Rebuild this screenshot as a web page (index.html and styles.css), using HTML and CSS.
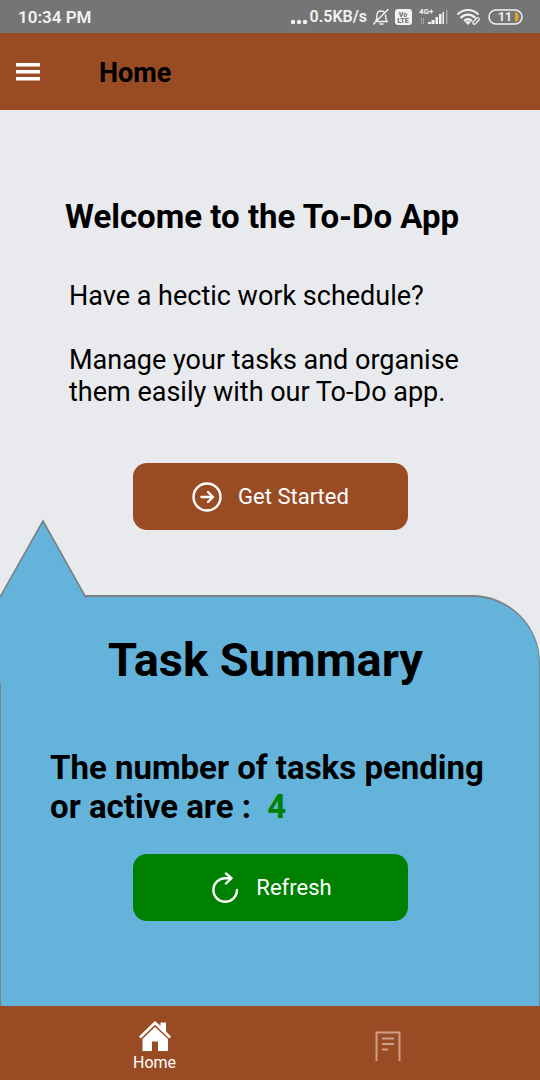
FILE: index.html
```html
<!DOCTYPE html>
<html lang="en">
<head>
<meta charset="utf-8">
<meta name="viewport" content="width=device-width, initial-scale=1">
<title>Home</title>
<link rel="stylesheet" href="styles.css">
</head>
<body class="app">
<div class="status-bar">
  <span>10:34 PM</span>
  <div class="status-right">
    <svg width="20" height="16" viewBox="0 0 20 16" fill="currentColor"><circle cx="3" cy="13" r="2.200"/><circle cx="9" cy="13" r="2.200"/><circle cx="15" cy="13" r="2.200"/></svg>
    <span class="speed">0.5KB/s</span>
    <svg class="bell" width="18" height="18" viewBox="0 0 18 18" fill="none" stroke="currentColor" stroke-width="1.400" stroke-linecap="round"><path d="M4 12.500C5 11 5 9 5 7c0-3 2-4 4-4 1 0 2 .3 3 1M13.500 7c0 3 .2 4.500 1.500 6.500H4.500M8 16h3M16 1.500 1.500 16"/></svg>
    <svg class="volte" width="17" height="16" viewBox="0 0 17 16"><rect width="17" height="16" rx="3" fill="currentColor"/><text class="volte-text" x="8" y="8" text-anchor="middle">Vo</text><text class="volte-text" x="8" y="14" text-anchor="middle">LTE</text></svg>
    <svg class="signal" width="29" height="18" viewBox="0 0 29 18" fill="currentColor"><text class="signal-text" x="0" y="6">4G+</text><path d="M9 14h3v2H9zM12.500 12h3v4h-3zM16.500 9h2.500v7h-2.500zM20 6h2.500v10H20zM23.500 4H25v12h-1.500z"/><path opacity=".4" d="M27 2h1.500v14H27zM2 10h1v6H2zM4 10h1v6H4z"/></svg>
    <svg class="wifi" width="26" height="18" viewBox="0 0 26 18" fill="none" stroke="currentColor" stroke-width="2.200"><path d="M1.500 6.500c6-6 15-6 21 0M4.500 10c4.500-4.500 10.500-4.500 15 0M8 13c2.500-2.300 5.500-2.300 8 0"/><path d="m12 17-3-3c2-1.500 4-1.500 6 0z" fill="currentColor" stroke="none"/><path stroke-width="1.200" d="m17 14 4-4c1-1 3 1 2 2l-4 4c-1 1-3-1-2-2z"/></svg>
    <svg width="35" height="16" viewBox="0 0 35 16"><rect x="1" y="1" width="33" height="14" rx="7" fill="none" stroke="currentColor" stroke-width="1.500"/><path d="M27 3c5 0 5 10 0 10z" fill="#e8a12c"/><text class="battery-text" x="17" y="12" text-anchor="middle">11</text></svg>
  </div>
</div>
<header class="header">
  <button class="menu" aria-label="Menu"><svg width="24" height="18" viewBox="0 0 24 18" fill="currentColor"><path d="M0 0h24v3.500H0zM0 7h24v3.500H0zM0 14h24v3.500H0z"/></svg></button>
  <h1 class="title">Home</h1>
</header>
<main class="main">
  <section class="intro">
    <h2 class="welcome">Welcome to the To-Do App</h2>
    <p class="copy">Have a hectic work schedule?</p>
    <p class="copy">Manage your tasks and organise them easily with our To-Do app.</p>
    <button class="button start"><svg width="32" height="32" viewBox="0 0 32 32" fill="none" stroke="currentColor" stroke-width="2.400" stroke-linecap="round" stroke-linejoin="round"><circle cx="16" cy="16" r="13.500"/><path d="M10.500 16H22M17 11l5 5-5 5"/></svg>Get Started</button>
  </section>
  <section class="summary">
    <svg class="pointer" width="88" height="164" viewBox="0 0 88 164"><path class="pointer-fill" d="M0 78 43 2l42 75 3 3v84H0z"/><path d="M0 78 43 2l42 75 2 2" fill="none" stroke="#7b8184" stroke-width="1.600"/></svg>
    <h2 class="summary-title">Task Summary</h2>
    <p class="count">The number of tasks pending or active are : &nbsp;<span class="number">4</span></p>
    <button class="button refresh"><svg width="32" height="32" viewBox="0 0 32 32" fill="none" stroke="currentColor" stroke-width="2.400" stroke-linecap="round" stroke-linejoin="round"><path d="M28 18A11.800 11.800 0 1 1 16.200 6.200H22M17 1.500l5.500 4.700L17 11.500"/></svg>Refresh</button>
  </section>
</main>
<nav class="tabs">
  <a class="tab" href="#home"><svg width="34" height="31" viewBox="0 0 34 31" fill="currentColor"><path d="M1 16.500 17 1l5.500 5V2.500H28v9l5 5-1.800 2L17 4.800 2.800 18.500z"/><path d="M17 7 4.500 19v12H14v-9.500h6V31h10V19z"/></svg>Home</a>
  <a class="tab inactive" href="#tasks" aria-label="Tasks"><svg width="26" height="30" viewBox="0 0 26 30" fill="none" stroke="currentColor" stroke-width="2"><path d="M1.500 30V1.500h23V30M7 7.500h12M7 13h12M7 18.500h6"/></svg></a>
</nav>
</body>
</html>
```
FILE: styles.css
```css
* { box-sizing: border-box; }
.app {
  margin: 0;
  min-height: 100vh;
  display: flex;
  flex-direction: column;
  background: #e8eaed;
  color: #000;
  font-family: Roboto, "Liberation Sans", sans-serif;
}
h1, h2, p { margin: 0; }
svg { display: block; flex: none; }
button { border: 0; font: inherit; color: #fff; cursor: pointer; }
.status-bar {
  height: 33px;
  padding: 0 17px 0 18px;
  display: flex;
  align-items: center;
  justify-content: space-between;
  background: #757575;
  color: #f2f2f2;
  font-size: 17px;
  font-weight: 600;
}
.status-right { display: flex; align-items: center; }
.speed { font-size: 16px; }
.bell { margin-left: 5px; }
.volte { margin-left: 5px; }
.signal { margin-left: 7px; }
.wifi { margin: 0 6px 0 8px; }
.volte-text { font-size: 7px; font-weight: 900; fill: #757575; }
.signal-text { font-size: 8px; font-weight: 700; }
.battery-text { font-size: 12px; font-weight: 700; fill: #f2f2f2; }
.header {
  height: 77px;
  padding: 2px 16px 0;
  display: flex;
  align-items: center;
  gap: 59px;
  background: #994b24;
}
.menu { padding: 0 0 2px; background: none; }
.title { font-size: 27px; line-height: 32px; font-weight: 700; }
.main { flex: 1; display: flex; flex-direction: column; }
.intro {
  padding: 87px 65px 65px;
  display: flex;
  flex-direction: column;
}
.welcome { font-size: 33px; line-height: 40px; white-space: nowrap; margin-bottom: 43px; }
.copy { font-size: 27px; line-height: 32px; margin: 0 0 32px 4px; }
.button {
  align-self: center;
  width: 275px;
  height: 67px;
  padding: 0;
  border-radius: 14px;
  display: flex;
  align-items: center;
  justify-content: center;
  gap: 15px;
  font-size: 22px;
}
.start { background: #994b24; margin-top: 23px; }
.summary {
  position: relative;
  flex: 1;
  padding: 35px 48px 48px 49px;
  display: flex;
  flex-direction: column;
  background: #64b3db;
  border: 2px solid #7b8184;
  border-width: 2px 1px 0;
  border-top-right-radius: 68px;
}
.pointer { position: absolute; left: -1px; top: -78px; }
.pointer-fill { fill: #64b3db; }
.summary-title {
  position: relative;
  padding-right: 10px;
  font-size: 47px;
  line-height: 56px;
  text-align: center;
}
.count { margin-top: 60px; font-size: 33px; line-height: 39px; font-weight: 700; }
.number { color: #008000; }
.refresh { background: #008000; margin-top: 28px; }
.tabs { height: 74px; padding: 0 36px 0 38px; display: flex; background: #994b24; }
.tab {
  flex: 1;
  padding: 14px 0 7px 0;
  display: flex;
  flex-direction: column;
  align-items: center;
  justify-content: space-between;
  color: #fff;
  font-size: 16px;
  line-height: 20px;
  text-decoration: none;
}
.inactive { color: #cf9e87; justify-content: center; padding: 5px 0 0; }
```
